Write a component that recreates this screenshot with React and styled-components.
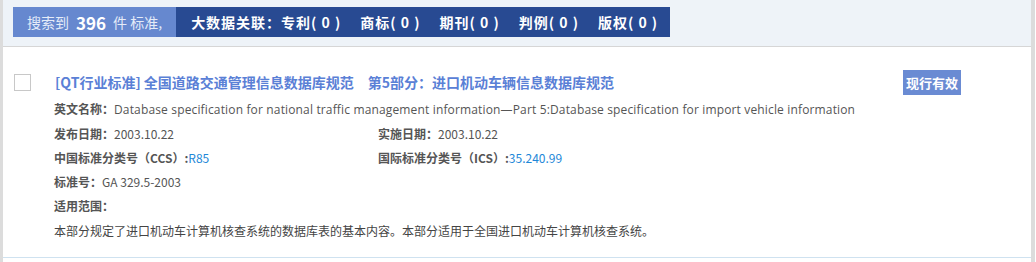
import React from "react";
import styled, { createGlobalStyle } from "styled-components";

const GlobalStyle = createGlobalStyle`
  body {
    margin: 0;
    background: #fff;
    font-family: "Noto Sans CJK SC", "Noto Sans", sans-serif;
  }
`;

const Panel = styled.div`
  width: 1028px;
  height: 262px;
  border-left: 3px solid #dcdcdc;
  border-right: 4px solid #dcdcdc;
  box-sizing: content-box;
  background: #fff;
`;

const Header = styled.div`
  height: 47px;
  background: #eef3f8;
  border-bottom: 1px solid #d6d6d6;
  box-sizing: border-box;
  padding: 7px 0 0 10px;
`;

const Bar = styled.div`
  display: inline-flex;
  height: 30px;
`;

const Count = styled.div`
  display: flex;
  align-items: center;
  background: #6688cf;
  color: #e4ebf8;
  font-size: 14px;
  padding: 0 14px 0 14px;
  b {
    color: #fff;
    font-size: 17px;
    margin: 0 7px;
  }
`;

const Related = styled.div`
  display: flex;
  align-items: center;
  gap: 19px;
  background: #284a92;
  color: #fff;
  font-weight: bold;
  font-size: 14px;
  letter-spacing: 1px;
  padding: 0 12px 0 15px;
`;

const Item = styled.div`
  position: relative;
  padding: 20px 0 0 11px;
`;

const TitleRow = styled.div`
  display: flex;
  align-items: center;
  height: 24px;
  margin-top: 3px;
`;

const Check = styled.span`
  width: 15px;
  height: 15px;
  border: 1px solid #c8c8c8;
  background: #fff;
  margin-right: 24px;
`;

const Title = styled.a`
  color: #5a80d6;
  font-weight: bold;
  font-size: 14px;
  text-decoration: none;
  white-space: pre;
`;

const Badge = styled.span`
  position: absolute;
  top: 23px;
  left: 900px;
  background: #6a8bd3;
  color: #fff;
  font-weight: bold;
  font-size: 13px;
  padding: 3px;
  line-height: 19px;
`;

const Fields = styled.div`
  margin-top: 3px;
  padding-left: ${(p) => p.$indent}px;
  display: grid;
  grid-template-columns: 324px 1fr;
  grid-auto-rows: 24px;
  font-size: 12px;
  color: #555;
  align-items: center;
`;

const Field = styled.div`
  grid-column: ${(p) => (p.$wide ? "1 / span 2" : "auto")};
  white-space: nowrap;
  b {
    font-weight: bold;
    color: #555;
  }
  a {
    color: #1e88d8;
    text-decoration: none;
  }
`;

const Latin = styled.span`
  font-family: "Open Sans", "Noto Sans CJK SC", sans-serif;
  letter-spacing: 0.15px;
`;

const Scope = styled.div`
  margin-top: 2px;
  padding-left: 40px;
  font-size: 12px;
  color: #444;
  line-height: 24px;
`;

const Footer = styled.div`
  margin-top: 14px;
  border-top: 1px solid #cfe2f0;
`;

export default function App() {
  return (
    <>
      <GlobalStyle />
      <Panel>
        <Header>
          <Bar>
            <Count>
              搜索到<b>396</b>件 标准,
            </Count>
            <Related>
              <span>大数据关联：专利( 0 )</span>
              <span>商标( 0 )</span>
              <span>期刊( 0 )</span>
              <span>判例( 0 )</span>
              <span>版权( 0 )</span>
            </Related>
          </Bar>
        </Header>
        <Item>
          <TitleRow>
            <Check />
            <Title href="#">[QT行业标准] 全国道路交通管理信息数据库规范　第5部分：进口机动车辆信息数据库规范</Title>
          </TitleRow>
          <Badge>现行有效</Badge>
          <Fields $indent={40}>
            <Field $wide>
              <b>英文名称：</b>
              <Latin>Database specification for national traffic management information—Part 5:Database specification for import vehicle information</Latin>
            </Field>
            <Field>
              <b>发布日期：</b>2003.10.22
            </Field>
            <Field>
              <b>实施日期：</b>2003.10.22
            </Field>
            <Field>
              <b>中国标准分类号（CCS）:</b><a href="#">R85</a>
            </Field>
            <Field>
              <b>国际标准分类号（ICS）:</b><a href="#">35.240.99</a>
            </Field>
            <Field $wide>
              <b>标准号：</b>GA 329.5-2003
            </Field>
            <Field $wide>
              <b>适用范围：</b>
            </Field>
          </Fields>
          <Scope>本部分规定了进口机动车计算机核查系统的数据库表的基本内容。本部分适用于全国进口机动车计算机核查系统。</Scope>
        </Item>
        <Footer />
      </Panel>
    </>
  );
}
